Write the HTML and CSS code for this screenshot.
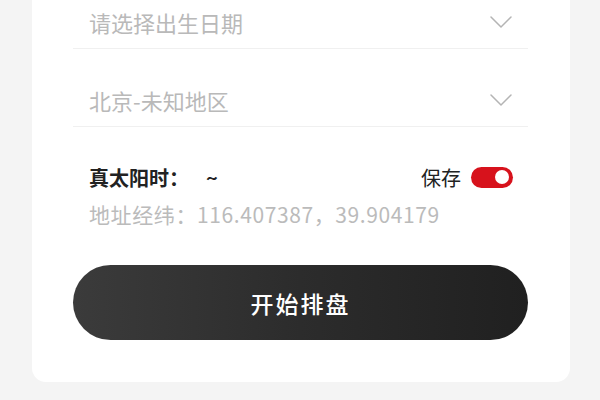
FILE: index.html
```html
<!DOCTYPE html>
<html lang="zh-CN">
<head>
<meta charset="utf-8">
<link rel="stylesheet" href="styles.css">
</head>
<body>
<div class="card">
  <div class="select-row first">
    <span class="placeholder">请选择出生日期</span>
    <svg class="chevron" width="22" height="12" viewBox="0 0 22 12"><path d="M1 1 L11 11 L21 1" fill="none" stroke="#b4b4b4" stroke-width="1.5" stroke-linecap="round" stroke-linejoin="round"/></svg>
  </div>
  <div class="select-row">
    <span class="placeholder">北京-未知地区</span>
    <svg class="chevron" width="22" height="12" viewBox="0 0 22 12"><path d="M1 1 L11 11 L21 1" fill="none" stroke="#b4b4b4" stroke-width="1.5" stroke-linecap="round" stroke-linejoin="round"/></svg>
  </div>
  <div class="info">
    <div class="info-row">
      <span class="solar">真太阳时：<span class="tilde">~</span></span>
      <div class="save">
        <span>保存</span>
        <span class="toggle"><span class="knob"></span></span>
      </div>
    </div>
    <div class="coords">地址经纬：116.407387，39.904179</div>
  </div>
  <button class="start">开始排盘</button>
</div>
</body>
</html>
```

FILE: styles.css
```css
html, body {
  margin: 0;
  padding: 0;
}
body {
  width: 600px;
  height: 400px;
  overflow: hidden;
  background: #f4f4f4;
  font-family: "Noto Sans CJK SC", "Noto Sans", sans-serif;
}
.card {
  box-sizing: border-box;
  width: 538px;
  margin: 0 0 0 32px;
  padding: 0 42px 42px 41px;
  background: #fff;
  border-radius: 0 0 14px 14px;
}
.select-row {
  box-sizing: border-box;
  display: flex;
  align-items: center;
  justify-content: space-between;
  height: 49px;
  padding: 0 16px 5px 16px;
  border-bottom: 1px solid #f0f0f0;
  margin-top: 29px;
}
.select-row.first {
  margin-top: 0;
}
.placeholder {
  font-size: 22px;
  line-height: 30px;
  color: #b9b9b9;
}
.chevron {
  display: block;
}
.info {
  margin-top: 37px;
  padding-left: 16px;
}
.info-row {
  display: flex;
  align-items: center;
  justify-content: space-between;
  height: 26px;
  padding-right: 15px;
}
.solar {
  font-size: 20px;
  font-weight: 600;
  color: #222;
}
.tilde {
  margin-left: 17px;
}
.save {
  display: flex;
  align-items: center;
  gap: 10px;
  font-size: 20px;
  color: #222;
}
.toggle {
  display: flex;
  align-items: center;
  justify-content: flex-end;
  box-sizing: border-box;
  width: 42px;
  height: 21px;
  padding-right: 4px;
  border-radius: 11px;
  background: #d7121c;
}
.knob {
  width: 14px;
  height: 14px;
  border-radius: 50%;
  background: #fff;
}
.coords {
  margin-top: 11px;
  height: 26px;
  line-height: 26px;
  font-size: 21px;
  letter-spacing: 0.6px;
  color: #bbbbbb;
}
.start {
  display: block;
  width: 100%;
  height: 75px;
  margin-top: 38px;
  border: none;
  border-radius: 38px;
  background: linear-gradient(90deg, #3b3b3b 0%, #2c2c2c 50%, #202020 100%);
  color: #fff;
  font-family: "Noto Sans CJK SC", "Noto Sans", sans-serif;
  font-size: 23px;
  font-weight: 500;
  letter-spacing: 2px;
  padding: 0;
}
```
